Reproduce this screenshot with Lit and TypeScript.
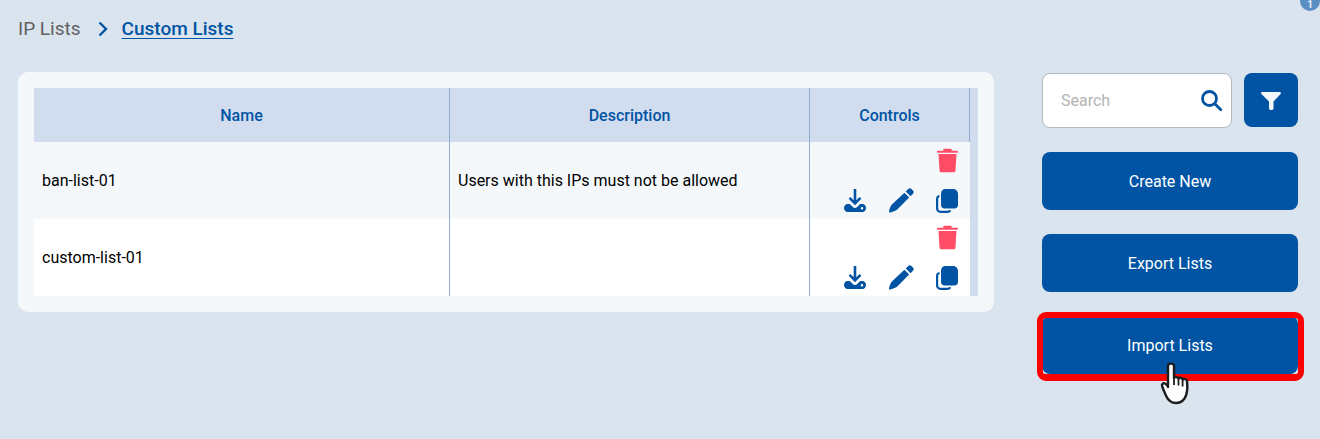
import { LitElement, html, css, svg } from 'lit';
import { customElement } from 'lit/decorators.js';

const rows = [
  { name: 'ban-list-01', description: 'Users with this IPs must not be allowed' },
  { name: 'custom-list-01', description: '' },
];

const trashIcon = svg`<path d="M8 1.500h6c.6 0 1 .4 1 1V3.500h5.200c.5 0 .8.4.8.9s-.3.9-.8.9H1.800c-.5 0-.8-.4-.8-.9s.3-.9.8-.9H7V2.500c0-.6.4-1 1-1z"/><path d="M2.400 6.500h17.200l-1 16c-.1 1-.9 1.500-1.800 1.500H5.200c-.9 0-1.700-.5-1.800-1.500z"/>`;
const downloadIcon = svg`<path d="M11 0V14M5.500 8.800l5.500 5.500 5.500-5.500" fill="none" stroke="currentColor" stroke-width="2.600"/><path fill-rule="evenodd" d="M3.500 15h2.300l3 3c1.200 1.200 3.200 1.200 4.400 0l3-3h2.300c2 0 3.500 1.700 3.500 4s-1.500 4-3.500 4H3.500C1.500 23 0 21.300 0 19s1.500-4 3.500-4zM18 17.900a1.300 1.300 0 1 0 0 2.600 1.300 1.300 0 0 0 0-2.600z"/>`;
const pencilIcon = svg`<path d="M19.200.9c.9-.9 2.300-.9 3.200 0l1.600 1.600c.9.900.9 2.300 0 3.200l-2.500 2.500-4.800-4.800z"/><path d="M15.400 4.700l4.800 4.800L8 21.700c-2.200 1.600-5.400 2.500-7.400 2.700-.4 0-.6-.2-.6-.6.300-2.400 1.200-5.200 2.900-7.400z"/>`;
const copyIcon = svg`<path d="M9.500 0h7.500C19.800 0 22 2.200 22 5V16c0 2-1.600 3.600-3.500 3.600H8.500C6.600 19.600 5 18 5 16V4.500C5 2 7 0 9.500 0z"/><path fill="none" stroke="currentColor" stroke-width="2.200" d="M3.500 7C2 7.300 1.100 8.300 1.100 9.800v9.700c0 1.800 1.400 3.300 3.300 3.300h6.800c1.500 0 2.700-.6 3-1.600"/>`;

@customElement('app-root')
export class AppRoot extends LitElement {
  static styles = css`
    :host {
      display: block;
      position: relative;
      height: 439px;
      overflow: hidden;
      background: #dae4ef;
      font-family: Roboto, "Liberation Sans", sans-serif;
    }

    .page {
      display: flex;
      align-items: flex-start;
      padding: 0 22px 0 18px;
    }

    .main {
      width: 976px;
      margin-right: 48px;
    }

    .crumbs {
      display: flex;
      align-items: center;
      height: 56px;
      margin-bottom: 16px;
      font-size: 19px;
    }

    .crumb-root {
      color: #616161;
    }

    .crumb-arrow {
      width: 10px;
      height: 16px;
      margin: 2px 14px 0 17px;
      fill: none;
      stroke: #0054a3;
      stroke-width: 2.4;
    }

    .crumb-current {
      color: #0054a3;
      font-weight: 500;
      text-decoration: underline;
      text-underline-offset: 3px;
    }

    .card {
      box-sizing: border-box;
      width: 976px;
      height: 240px;
      padding: 16px;
      background: #f5f8fb;
      border-radius: 10px;
    }

    .table {
      display: grid;
      grid-template-columns: 416px 360px 160px 8px;
      grid-template-rows: 54px 77px 77px;
      font-size: 16px;
      color: #000;
    }

    .head {
      display: flex;
      align-items: center;
      justify-content: center;
      background: #d1ddee;
      color: #0054a3;
      font-weight: 500;
    }

    .cell {
      display: flex;
      align-items: center;
      box-sizing: border-box;
      padding: 0 8px 1px;
    }

    .sep {
      border-right: 1px solid #8eaed6;
    }

    .odd {
      background: #f5f8fb;
    }

    .even {
      background: #fff;
    }

    .strip {
      background: #d1ddee;
    }

    .controls {
      display: grid;
      grid-template-columns: repeat(3, 46px);
      grid-template-rows: 1fr 1fr;
      justify-content: end;
      align-items: center;
      justify-items: center;
      padding: 6px 0 1px 22px;
    }

    .icon {
      display: block;
      fill: #0054a3;
      color: #0054a3;
    }

    .trash {
      grid-column: 3;
      grid-row: 1;
      fill: #ff4d67;
      align-self: start;
    }

    .low {
      grid-row: 2;
    }

    .side {
      display: flex;
      flex-direction: column;
      gap: 24px;
      width: 256px;
      padding-top: 73px;
    }

    .search-row {
      display: flex;
      gap: 12px;
      height: 55px;
    }

    .search {
      display: flex;
      align-items: center;
      justify-content: space-between;
      box-sizing: border-box;
      width: 190px;
      height: 55px;
      padding: 0 9px 0 18px;
      background: #fff;
      border: 1px solid #b5b8bd;
      border-radius: 8px;
      color: #b4b4b4;
      font-size: 16px;
    }

    .filter {
      display: flex;
      align-items: center;
      justify-content: center;
      width: 54px;
      height: 54px;
      background: #0054a3;
      border-radius: 8px;
    }

    .filter svg {
      margin-top: 2px;
    }

    .action {
      position: relative;
      display: flex;
      align-items: center;
      justify-content: center;
      height: 58px;
      background: #0054a3;
      border-radius: 8px;
      color: #fff;
      font-size: 16px;
    }

    .highlight::after {
      content: '';
      position: absolute;
      inset: -4px -6px -7px -5px;
      border-style: solid;
      border-color: #ff0000;
      border-width: 6px 6px 7px 6px;
      border-radius: 9px;
    }

    .badge {
      position: absolute;
      top: -9px;
      left: 1300px;
      width: 20px;
      height: 20px;
      border-radius: 50%;
      background: #5b8fc4;
    }

    .badge span {
      display: block;
      margin-top: 9px;
      color: #e8f0f8;
      font-size: 10px;
      font-weight: 700;
      line-height: 9px;
      text-align: center;
    }

    .cursor {
      position: absolute;
      top: 362px;
      left: 1159px;
    }
  `;

  render() {
    return html`
      <div class="page">
        <div class="main">
          <div class="crumbs">
            <span class="crumb-root">IP Lists</span>
            <svg class="crumb-arrow" viewBox="0 0 10 16"><path d="M1.500 1.500l6.500 6.500-6.500 6.500" /></svg>
            <span class="crumb-current">Custom Lists</span>
          </div>
          <div class="card">
            <div class="table">
              <div class="head sep">Name</div>
              <div class="head sep">Description</div>
              <div class="head sep">Controls</div>
              <div class="strip"></div>
              ${rows.map((row, i) => this.renderRow(row, i))}
            </div>
          </div>
        </div>
        <div class="side">
          <div class="search-row">
            <div class="search">
              <span>Search</span>
              <svg class="icon" width="21" height="21" viewBox="0 0 21 21">
                <circle cx="8.500" cy="8.500" r="7" fill="none" stroke="#0054a3" stroke-width="2.800" />
                <path d="M14 14l5.800 5.800" fill="none" stroke="#0054a3" stroke-width="2.800" stroke-linecap="round" />
              </svg>
            </div>
            <div class="filter">
              <svg width="20" height="18" viewBox="0 0 20 18" fill="#f4f7fb">
                <path d="M1.500 0h17c1.200 0 1.800 1.100 1.100 2L12.500 9.500v6.700c0 1-.8 1.800-1.800 1.800h-.9c-1 0-1.800-.8-1.800-1.800V9.500L.4 2C-.3 1.100.3 0 1.500 0z" />
              </svg>
            </div>
          </div>
          <div class="action">Create New</div>
          <div class="action">Export Lists</div>
          <div class="action highlight">Import Lists</div>
        </div>
      </div>
      <div class="badge"><span>1</span></div>
      <svg class="cursor" width="32" height="44" viewBox="0 0 32 44">
        <path
          d="M9 4c0-3.200 6-3.200 6 0V16c.8-1.500 3.500-1.500 4.500.5 1-1.300 3.500-1 4.100 1 1.200-1 4-.5 4.400 1.500.6 5 .4 10-.8 14-1.400 4-4.500 8-10 8-4.500 0-8-2.500-10-7-1.300-3-3-6.500-4-9.500-.8-2 .8-4 2.800-3 1 .5 2.500 1.800 3 3.500z"
          fill="#fff"
          stroke="#1d1d1d"
          stroke-width="2.400"
          stroke-linejoin="round"
        />
        <path d="M15 16v7M19.500 16.500v7M23.600 17.500v7" fill="none" stroke="#1d1d1d" stroke-width="1.800" />
      </svg>
    `;
  }

  private renderRow(row: { name: string; description: string }, i: number) {
    const tone = i % 2 === 0 ? 'odd' : 'even';
    return html`
      <div class="cell sep ${tone}">${row.name}</div>
      <div class="cell sep ${tone}">${row.description}</div>
      <div class="controls ${tone}">
        <svg class="icon trash" width="21" height="25" viewBox="1 1.500 20 22.500">${trashIcon}</svg>
        <svg class="icon low" width="22" height="23" viewBox="0 0 22 23">${downloadIcon}</svg>
        <svg class="icon low" width="25" height="25" viewBox="0 0 25 25">${pencilIcon}</svg>
        <svg class="icon low" width="22" height="24" viewBox="0 0 22 24">${copyIcon}</svg>
      </div>
      <div class="strip"></div>
    `;
  }
}
